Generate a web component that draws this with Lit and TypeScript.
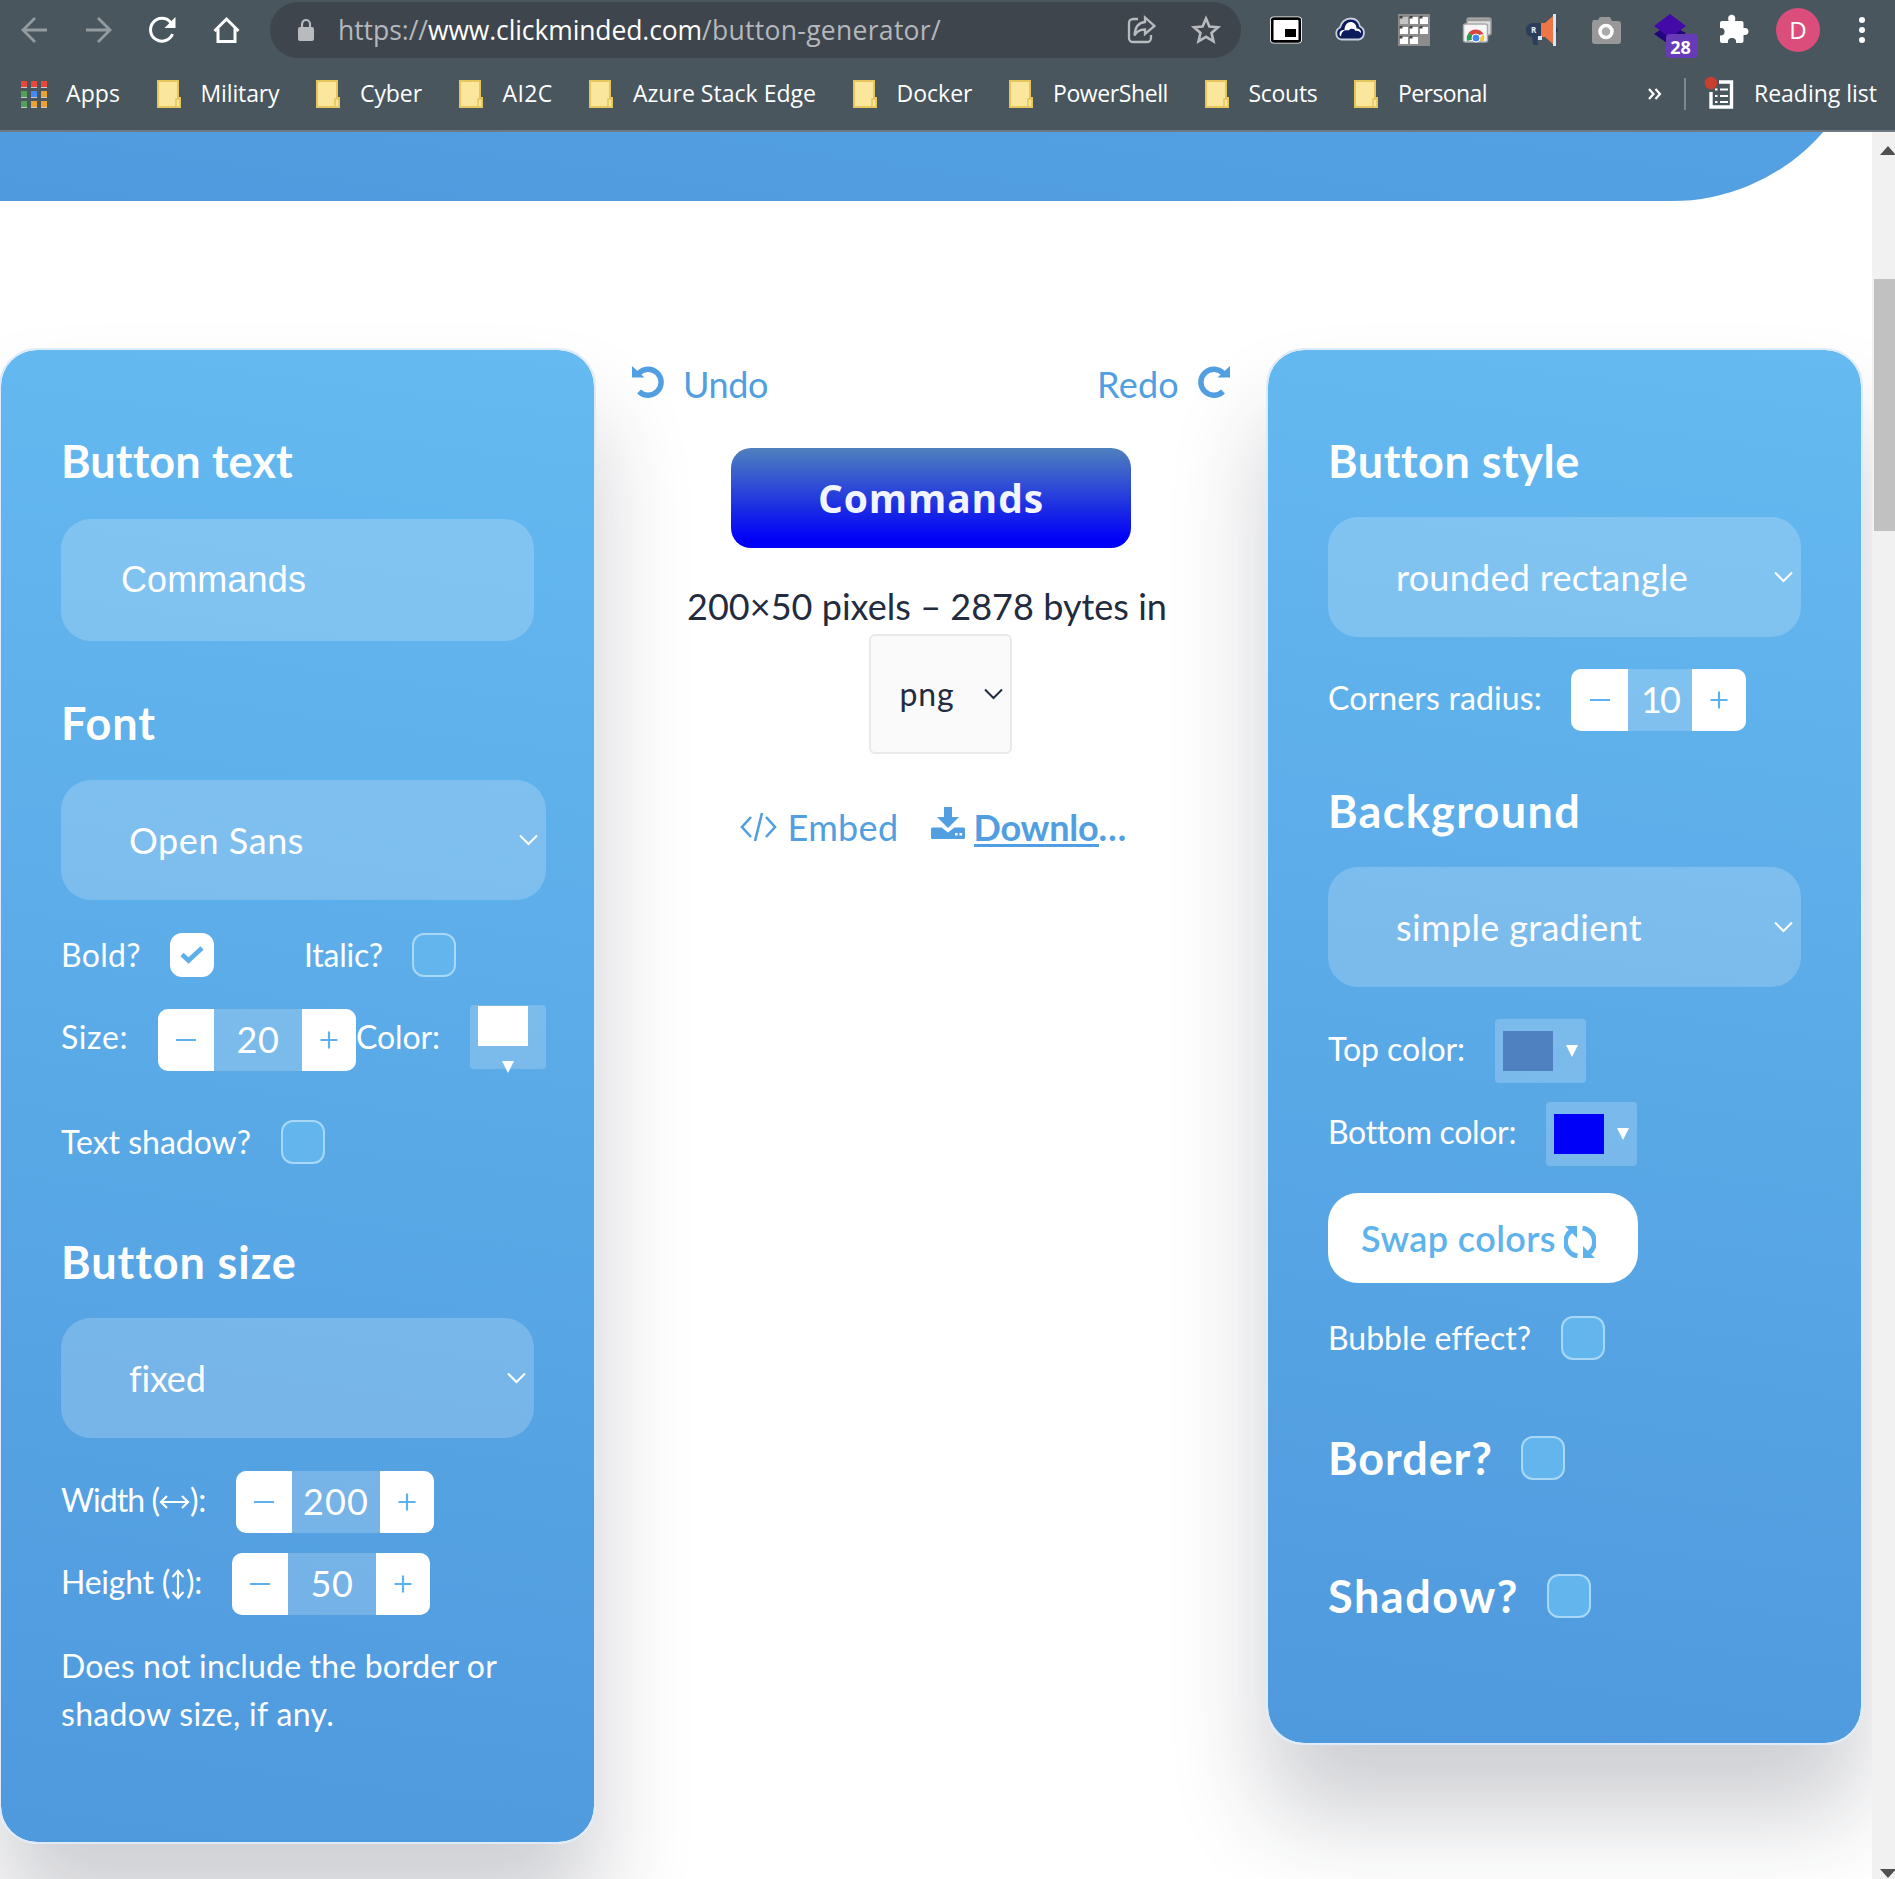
import { LitElement, html, css, svg, nothing } from "lit";
import { customElement, property, state } from "lit/decorators.js";

/** Text run that tracks its letters so that it takes up a given width. */
@customElement("fit-text")
class FitText extends LitElement {
  @property() text = "";
  @property({ type: Number }) width = 0;
  @state() private spacing = 0;
  static styles = css`
    :host { display: inline-block; white-space: pre; flex: none; }
    .run { display: inline-block; }
  `;
  async firstUpdated() {
    await document.fonts.ready;
    const run = this.renderRoot.querySelector(".run") as HTMLElement;
    const natural = run.getBoundingClientRect().width;
    if (this.width && natural) {
      this.spacing = (this.width - natural) / this.text.length;
    }
  }
  render() {
    return html`<span class="run" style="letter-spacing:${this.spacing}px">${this.text}</span>`;
  }
}

const t = (text: string, width: number) =>
  html`<fit-text .text=${text} .width=${width}></fit-text>`;

const chevron = html`<svg class="chev" width="19" height="12" viewBox="0 0 19 12"><path d="M1 1.5L9.5 10L18 1.5" fill="none" stroke="currentColor" stroke-width="2"/></svg>`;

const folder = html`<svg width="24" height="28" viewBox="0 0 24 28"><path d="M1 1h20v17h2v9H1z" fill="#fbe69e" stroke="#e6c65c" stroke-width="2"/><path d="M19 27v-8h4v8z" fill="#fbe69e" stroke="#e6c65c" stroke-width="1.5"/></svg>`;

const appDots = ["#e8483a", "#e8483a", "#e8483a", "#51a05a", "#4689f0", "#e9a233", "#51a05a", "#e9a233", "#e9a233"];

const bookmarks: [string, number][] = [
  ["Military", 79], ["Cyber", 62], ["AI2C", 50], ["Azure Stack Edge", 183],
  ["Docker", 76], ["PowerShell", 115], ["Scouts", 69], ["Personal", 89],
];

@customElement("browser-bar")
class BrowserBar extends LitElement {
  static styles = css`
    :host { display: block; height: 130px; background: #49565e; border-bottom: 2px solid #6e7983; color: #fff; font-family: "Open Sans", "Noto Sans", sans-serif; }
    svg { display: block; flex: none; overflow: visible; }
    .tools { display: flex; align-items: center; height: 60px; }
    .nav { display: flex; align-items: center; gap: 36.500px; width: 249px; padding-left: 21px; }
    .omni { display: flex; align-items: center; width: 971px; height: 56px; border-radius: 28px; background: #3e454c; margin-top: -1px; box-sizing: border-box; padding: 0 20px 0 28px; font-size: 26.5px; color: #b4b8bc; }
    .host { color: #fff; }
    .lock { margin-right: 24px; }
    .url { display: flex; flex: 1; line-height: 56px; }
    .acts { display: flex; align-items: center; gap: 35px; }
    .exts { display: flex; align-items: center; gap: 32px; margin-left: 29px; }
    .badged { position: relative; }
    .badge { position: absolute; left: 12px; top: 20px; width: 32px; height: 24px; border-radius: 4px; background: #673ab7; font-size: 18px; font-weight: 700; line-height: 27px; text-align: center; box-sizing: border-box; padding-right: 3px; }
    .avatar { width: 44px; height: 44px; border-radius: 50%; background: #db4e7c; font-size: 24px; line-height: 44px; text-align: center; margin-left: 26px; }
    .more { margin-left: 39px; }
    .marks { display: flex; align-items: center; height: 68px; padding-left: 21px; font-size: 23px; }
    .marks fit-text { line-height: 66px; height: 68px; }
    .apps { margin-right: 19px; }
    .folder { margin: 0 20px 0 36.5px; display: block; }
    .spacer { flex: 1; }
    .sep { width: 2px; height: 32px; background: #7c878e; margin: 0 19px 0 22px; }
    .list { margin-right: 17px; }
    .end { margin-right: 18px; display: flex; }
  `;
  render() {
    return html`
      <div class="tools">
        <div class="nav">
          <svg width="27" height="28" viewBox="0 0 27 28" fill="none" stroke="#949b9f" stroke-width="2.8"><path d="M26 14H2M14 2L2 14l12 12"/></svg>
          <svg width="27" height="28" viewBox="0 0 27 28" fill="none" stroke="#949b9f" stroke-width="2.8"><path d="M1 14h24M13 2l12 12L13 26"/></svg>
          <svg width="28" height="28" viewBox="0 0 28 28"><path d="M24.5 18A11.4 11.4 0 1 1 22.5 6.2" fill="none" stroke="#fff" stroke-width="3"/><path d="M27.5 1v11h-11z" fill="#fff"/></svg>
          <svg width="27" height="28" viewBox="0 0 27 28"><path d="M5 12.5v13h17v-13M1.5 15L13.5 3l12 12" fill="none" stroke="#fff" stroke-width="3"/></svg>
        </div>
        <div class="omni">
          <svg class="lock" width="16" height="22" viewBox="0 0 16 22"><rect y="8" width="16" height="14" rx="2" fill="#b8bbbe"/><path d="M4 9V5a4 4 0 0 1 8 0v4" fill="none" stroke="#b8bbbe" stroke-width="2.2"/></svg>
          <div class="url">${t("https://", 90)}<span class="host">${t("www.clickminded.com", 274)}</span>${t("/button-generator/", 239)}</div>
          <div class="acts">
            <svg width="28" height="28" viewBox="0 0 28 28" fill="none" stroke="#b8bbbe" stroke-width="2.3"><path d="M10 3H5a4 4 0 0 0-4 4v15a4 4 0 0 0 4 4h14a4 4 0 0 0 4-4v-3"/><path d="M17 6V1.500l9.500 8.500L17 18v-4.500c-6 0-8.500 2-10.500 6C7 12 10 6.500 17 6z"/></svg>
            <svg width="30" height="30" viewBox="0 0 30 30"><path d="M15 3.500l3.400 8 8.600.7-6.500 5.700 2 8.400L15 21.800l-7.500 4.500 2-8.400L3 12.200l8.600-.7z" fill="none" stroke="#b8bbbe" stroke-width="2.6"/></svg>
          </div>
        </div>
        <div class="exts">
          <svg width="32" height="32" viewBox="0 0 32 32"><rect x="0" y="2.500" width="32" height="27" rx="4" fill="#fff"/><rect x="2.200" y="4.600" width="27.600" height="22.800" rx="2" fill="#fff" stroke="#000" stroke-width="2.600"/><rect x="15" y="15" width="11" height="8" fill="#000"/></svg>
          <svg width="32" height="32" viewBox="0 0 32 32"><path d="M7 25.500a6.400 6.400 0 0 1-1-12C7 8 11.500 4.500 16.500 4.500c5 0 8.500 3 9.500 8A7 7 0 0 1 25 25.500z" fill="#0b1b5c" stroke="#c9cfdf" stroke-width="1.800"/><path d="M5.500 20c0-3 2.500-4.500 5-4 0-5 3-8 6-8 3.500 0 6 2.500 6 6.500 3 0 5 2 4.500 5-1-2-3-3-5.500-2.500-1-2.500-5-3-7-.5-3.500-1-7 .5-7.500 6-1-.5-1.500-1.500-1.500-2.500z" fill="#fff"/></svg>
          <svg width="32" height="32" viewBox="0 0 32 32"><rect width="32" height="32" fill="#8c8c8c"/>${[0, 1, 2, 3, 4, 5, 6, 7].map((i) => svg`<path d="M${2 + (i % 3) * 10} ${3 + Math.floor(i / 3) * 10}h8v7h-8z" fill=${i ? "#fff" : "#c4c4c4"}/><path d="M${1.5 + (i % 3) * 10} ${2 + Math.floor(i / 3) * 10}h3v2.500h-3z" fill="#444"/>`)}</svg>
          <svg width="32" height="32" viewBox="0 0 32 32"><rect x="5" y="4" width="24" height="17" rx="2" fill="#ddd" stroke="#999" stroke-width="1.500"/><path d="M5 6h24" stroke="#999" stroke-width="2.500"/><rect x="1.500" y="10" width="24" height="18" rx="2" fill="#f7f7f7" stroke="#aaa" stroke-width="1.500"/><path d="M5 27a8.500 8.500 0 0 1 3-9l5 7z" fill="#2f9e4f"/><path d="M6.500 19a9 9 0 0 1 15 1l-9 2z" fill="#d8453c"/><path d="M21.500 20a8 8 0 0 1 0 7h-7z" fill="#f8c63c"/><circle cx="14" cy="24" r="4" fill="#4285f4" stroke="#fff"/></svg>
          <svg width="32" height="32" viewBox="0 0 32 32"><path d="M7 9h9v14h-5l1 8H7l-1-8C2 23 0 20 0 16s3-7 7-7zM29 13c4 0 4 6 0 6z" fill="#2a3e5a"/><path d="M15 9l4 0 8-7v28l-8-7h-4z" fill="#ee7546"/><rect x="27" width="3" height="32" fill="#d6e8f7"/><rect x="12" y="22" width="4" height="4" fill="#d6e8f7"/><text x="5" y="19" font-size="8" font-weight="700" fill="#e8eef5">R</text></svg>
          <svg width="32" height="32" viewBox="0 0 32 32"><path d="M3 6h5l2-3h10l2 4h6a3 3 0 0 1 3 3v17a3 3 0 0 1-3 3H5a3 3 0 0 1-3-3V9z" fill="#989898"/><circle cx="16" cy="17.500" r="6" fill="#aaa" stroke="#fff" stroke-width="3.500"/></svg>
          <div class="badged">
            <svg width="32" height="32" viewBox="0 0 32 32"><path d="M0 20l6-4 20 0 6 3-16 12z" fill="#22057a"/><path d="M16 0l16 12-16 12L0 12z" fill="#430aa8"/></svg>
            <span class="badge">28</span>
          </div>
          <svg width="32" height="32" viewBox="0 0 32 32"><path d="M4 7h6.500C9.500 3 11 .8 13.700 .8S18 3 17 7h6.500a2 2 0 0 1 2 2v5c3.500-.6 5 1.200 5 3.500s-1.500 4-5 3.500v6a2 2 0 0 1-2 2H18c.500-3.500-1.200-5-4-5s-4.500 1.500-4 5H4a2 2 0 0 1-2-2v-5.500c3 .3 4.600-1.200 4.600-3.900S5 13.500 2 14V9a2 2 0 0 1 2-2z" fill="#fff"/></svg>
        </div>
        <div class="avatar">D</div>
        <svg class="more" width="6" height="28" viewBox="0 0 6 28" fill="#fff"><circle cx="3" cy="4" r="3"/><circle cx="3" cy="14" r="3"/><circle cx="3" cy="24" r="3"/></svg>
      </div>
      <div class="marks">
        <svg class="apps" width="26" height="28" viewBox="0 0 26 28">${appDots.map((c, i) => svg`<rect x=${(i % 3) * 10} y=${1 + Math.floor(i / 3) * 10} width="6" height="6" fill=${c}/><rect x=${(i % 3) * 10} y=${7 + Math.floor(i / 3) * 10} width="6" height="1" fill="#c6c9cb"/>`)}</svg>
        ${t("Apps", 54)}
        ${bookmarks.map(([name, w]) => html`<span class="folder">${folder}</span>${t(name, w)}`)}
        <span class="spacer"></span>
        <svg width="14" height="12" viewBox="0 0 14 12" fill="none" stroke="#fff" stroke-width="2.200"><path d="M1 1l4.500 5L1 11M7.500 1l4.500 5-4.500 5"/></svg>
        <span class="sep"></span>
        <svg class="list" width="32" height="34" viewBox="0 0 32 34"><path d="M14 5h12.500v25H6V15" fill="none" stroke="#fff" stroke-width="3.400"/><path d="M10 12.500h2.500M15 12.500h8M10 19h2.500M15 19h8M10 25h2.500M15 25h8" stroke="#fff" stroke-width="2.200"/><circle cx="6" cy="6" r="6.300" fill="#c83e2f"/></svg>
        <span class="end">${t("Reading list", 123)}</span>
      </div>`;
  }
}

@customElement("app-root")
class AppRoot extends LitElement {
  static styles = css`
    :host { display: block; width: 1895px; height: 1879px; overflow: hidden; background: #fff; color: #fff; font-family: Lato, "Open Sans", sans-serif; }
    svg { display: block; flex: none; }
    .view { display: flex; height: 1747px; overflow: hidden; }
    .page { width: 1872px; flex: none; overflow: hidden; }
    .hero { height: 200px; margin-top: -131px; border-bottom-right-radius: 200px; background: linear-gradient(8deg, #4f9ade, #55a4e4); }
    .cols { display: flex; align-items: flex-start; margin: 147px 0 0 -1px; }
    .card { box-sizing: border-box; width: 597px; flex: none; border: 2px solid #dfeafb; border-radius: 38px; padding: 81px 60px 0; background: linear-gradient(188deg, #65baf1, #4f99dd) padding-box; box-shadow: 0 70px 95px rgba(31, 38, 55, 0.22); }
    .left { height: 1496px; }
    .right { height: 1397px; }
    .h { font-size: 45px; font-weight: 700; line-height: 60px; height: 60px; }
    .field { display: flex; align-items: center; justify-content: space-between; box-sizing: border-box; height: 120px; border-radius: 30px; background: rgba(255, 255, 255, 0.2); padding: 0 8px 0 68px; font-size: 36px; line-height: 117px; }
    .field.input { height: 122px; padding-left: 60px; font-family: "Liberation Sans", Arial, sans-serif; font-size: 36px; line-height: 122px; }
    .wide { width: 485px; }
    .row { display: flex; align-items: center; font-size: 32px; line-height: 44px; }
    .row.top { align-items: flex-start; height: 66px; }
    .stepwrap { margin-top: 4px; }
    .lab { flex: none; display: block; }
    .lab.up { margin-top: -5px; }
    .lab.base { margin-top: 10px; }
    .box { box-sizing: border-box; width: 44px; height: 44px; border: 2px solid #a9d7f6; border-radius: 12px; background: #62b6ed; display: grid; place-items: center; flex: none; }
    .box.on { background: #fff; border-color: #fff; }
    .step { display: flex; height: 62px; border-radius: 10px; overflow: hidden; background: rgba(255, 255, 255, 0.2); color: #fff; flex: none; }
    .btn { width: 56px; background: #fff; display: grid; place-items: center; }
    .btn.inc { width: 54px; }
    .btn.far { width: 57px; }
    .num { width: 88px; font-size: 36px; line-height: 60px; display: flex; justify-content: center; }
    .num.slim { width: 64px; }
    .pick { box-sizing: border-box; display: flex; align-items: center; width: 91px; height: 64px; border-radius: 4px; background: rgba(255, 255, 255, 0.2); padding-left: 8px; gap: 13px; flex: none; }
    .pick.tall { width: 76px; flex-direction: column; align-items: flex-start; padding-top: 1px; gap: 15px; }
    .pick.tall .tri { margin-left: 24px; }
    .sw { width: 50px; height: 40px; flex: none; }
    .c-white { background: #fff; }
    .c-top { background: #4f81c1; }
    .c-bottom { background: #0000f8; }
    .note { font-size: 32px; line-height: 48px; margin-top: 27px; }
    .note fit-text { display: block; }
    .swap { display: flex; align-items: center; width: 310px; height: 90px; box-sizing: border-box; border-radius: 30px; background: #fff; color: #5fb3ec; font-size: 36px; font-weight: 600; padding-left: 33px; gap: 8px; margin-top: 27px; line-height: 84px; }
    .swap svg { margin-top: 8px; }
    .m19 { margin-top: 19px; } .m20 { margin-top: 20px; } .m26 { margin-top: 26px; } .m27 { margin-top: 27px; } .m28 { margin-top: 28px; }
    .m32 { margin-top: 32px; } .m33 { margin-top: 33px; } .m49 { margin-top: 49px; } .m50 { margin-top: 50px; } .m52 { margin-top: 52px; }
    .m68 { margin-top: 68px; } .m76 { margin-top: 76px; } .m94 { margin-top: 94px; }
    .w-bold { width: 109px; } .w-italic { width: 108px; margin-left: 90px; } .w-size { width: 97px; } .w-color { width: 114px; }
    .w-shadow { width: 220px; } .w-width { width: 175px; } .w-height { width: 171px; }
    .w-radius { width: 243px; } .w-top { width: 167px; } .w-bot { width: 218px; } .w-bubble { width: 233px; }
    .w-border { width: 193px; } .w-sh { width: 219px; }
    .row.big { font-size: 45px; font-weight: 700; height: 44px; }
    .arrow { display: flex; align-items: center; }
    .arrow svg { margin-top: 5px; }
    .mid { width: 670px; display: flex; flex-direction: column; align-items: center; position: relative; z-index: 1; color: #519fe0; font-size: 36px; }
    .undo { display: flex; justify-content: space-between; align-self: stretch; padding: 16px 36px 0; line-height: 40px; }
    .undo span { display: flex; gap: 18px; }
    .undo svg { margin-top: 1px; }
    .preview { display: flex; justify-content: center; width: 400px; height: 100px; border-radius: 20px; background: linear-gradient(#4f81bd, #0000f8 92%); margin-top: 44px; color: #f2f4ff; font: 700 39px/99px "Open Sans", sans-serif; }
    .cap { color: #222c3e; margin: 35px 8px 0 0; line-height: 46px; height: 51px; }
    .fmt { box-sizing: border-box; display: flex; align-items: center; justify-content: space-between; width: 143px; height: 120px; border: 2px solid #e9e9e9; border-radius: 6px; background: #fafafa; color: #222c3e; font-size: 32px; line-height: 112px; padding: 0 7px 0 29px; margin-left: 18px; }
    .links { display: flex; align-items: flex-start; line-height: 40px; margin: 53px 0 0 7px; width: 390px; }
    .links .code { margin: 5px 11px 0 0; }
    .links .dl { margin: 0 9px 0 32px; }
    .down { font-weight: 700; display: flex; }
    .under { border-bottom: 3px solid #519fe0; height: 37px; line-height: 40px; }
    .bar { width: 23px; background: #f1f1f1; display: flex; flex-direction: column; flex: none; align-items: center; overflow: hidden; position: relative; z-index: 2; }
    .thumb { width: 21px; height: 252px; background: #c1c1c1; margin: 124px 0 auto 2px; }
    .bar .up { margin: 14px 0 0 9px; }
    .bar .dn { margin: 0 0 1px 9px; }
  `;

  private check(on = false) {
    return html`<span class="box ${on ? "on" : ""}">${on ? html`<svg width="24" height="18" viewBox="0 0 24 18"><path d="M2 8.500l6.500 6L22 2" fill="none" stroke="#5cafe9" stroke-width="4.600"/></svg>` : nothing}</span>`;
  }
  private stepper(value: string, w: number, slim = false) {
    return html`<span class="step">
      <span class="btn ${slim ? "far" : ""}"><svg width="20" height="20" viewBox="0 0 20 20"><path d="M0 10h20" stroke="#5cb2ec" stroke-width="2.200"/></svg></span>
      <span class="num ${slim ? "slim" : ""}">${t(value, w)}</span>
      <span class="btn inc"><svg width="18" height="18" viewBox="0 0 18 18"><path d="M0.500 9h17M9 .500v17" stroke="#5cb2ec" stroke-width="2.200"/></svg></span>
    </span>`;
  }
  private picker(color: string, tall = false) {
    return html`<span class="pick ${tall ? "tall" : ""}"><span class="sw ${color}"></span><svg class="tri" width="12" height="12" viewBox="0 0 12 12"><path d="M0 0h12L6 12z" fill="#fff"/></svg></span>`;
  }
  private select(text: string, w: number, cls: string) {
    return html`<div class="field ${cls}">${t(text, w)}${chevron}</div>`;
  }

  render() {
    return html`
      <browser-bar></browser-bar>
      <div class="view">
        <div class="page">
          <div class="hero"></div>
          <div class="cols">
            <section class="card left">
              <div class="h">${t("Button text", 230)}</div>
              <div class="field input m28">${t("Commands", 185)}</div>
              <div class="h m52">${t("Font", 95)}</div>
              ${this.select("Open Sans", 175, "wide m27")}
              <div class="row m33">
                <span class="lab w-bold">${t("Bold?", 80)}</span>${this.check(true)}
                <span class="lab w-italic">${t("Italic?", 79)}</span>${this.check()}
              </div>
              <div class="row top m28">
                <span class="lab base w-size">${t("Size:", 67)}</span>
                <span class="stepwrap">${this.stepper("20", 43)}</span>
                <span class="lab base w-color">${t("Color:", 84)}</span>
                ${this.picker("c-white", true)}
              </div>
              <div class="row m49"><span class="lab w-shadow">${t("Text shadow?", 190)}</span>${this.check()}</div>
              <div class="h m68">${t("Button size", 234)}</div>
              ${this.select("fixed", 76, "m26")}
              <div class="row m33">
                <span class="lab up w-width arrow">${t("Width (", 98)}<svg width="31" height="16" viewBox="0 0 31 16"><path d="M2 8h27M8 2L2 8l6 6M23 2l6 6-6 6" fill="none" stroke="#fff" stroke-width="2.200"/></svg>${t("):", 16)}</span>${this.stepper("200", 66)}
              </div>
              <div class="row m20">
                <span class="lab up w-height arrow">${t("Height (", 109)}<svg width="16" height="31" viewBox="0 0 16 31"><path d="M8 2v27M2.500 8L8 2l5.500 6M2.500 23L8 29l5.500-6" fill="none" stroke="#fff" stroke-width="2.200"/></svg>${t("):", 16)}</span>${this.stepper("50", 43)}
              </div>
              <div class="note">${t("Does not include the border or", 436)}${t("shadow size, if any.", 273)}</div>
            </section>

            <section class="mid">
              <div class="undo">
                <span><svg width="33" height="33" viewBox="0 0 33 33"><path d="M6.500 8.500A13 13 0 1 1 7 26.500" fill="none" stroke="currentColor" stroke-width="5.400"/><path d="M0 1l12.500 11.500H0z" fill="currentColor"/></svg>${t("Undo", 85)}</span>
                <span>${t("Redo", 82)}<svg width="33" height="33" viewBox="0 0 33 33"><path d="M26.500 8.500A13 13 0 1 0 26 26.500" fill="none" stroke="currentColor" stroke-width="5.400"/><path d="M33 1L20.500 12.500H33z" fill="currentColor"/></svg></span>
              </div>
              <div class="preview">${t("Commands", 226)}</div>
              <div class="cap">${t("200×50 pixels – 2878 bytes in", 480)}</div>
              <div class="fmt">${t("png", 55)}${chevron}</div>
              <div class="links">
                <svg class="code" width="37" height="30" viewBox="0 0 37 30" fill="none" stroke="currentColor" stroke-width="2.600"><path d="M11 5L2 15l9 10M26 5l9 10-9 10M22 1l-7 28"/></svg>
                ${t("Embed", 111)}
                <svg class="dl" width="34" height="32" viewBox="0 0 34 32" fill="currentColor"><path d="M13 0h8v10h7L17 21 6 10h7z"/><path fill-rule="evenodd" d="M1.500 20.500h9l6.500 5 6.500-5h9a1.500 1.500 0 0 1 1.500 1.500v8.500a1.500 1.500 0 0 1-1.500 1.500h-31A1.500 1.500 0 0 1 0 30.500V22a1.500 1.500 0 0 1 1.500-1.500zM24 26v2.600h2.600V26zM28.500 26v2.600h2.600V26z"/></svg>
                <span class="down"><span class="under">${t("Downlo", 125)}</span>${t("…", 29)}</span>
              </div>
            </section>

            <section class="card right">
              <div class="h">${t("Button style", 250)}</div>
              ${this.select("rounded rectangle", 292, "m26")}
              <div class="row m32"><span class="lab up w-radius">${t("Corners radius:", 214)}</span>${this.stepper("10", 38, true)}</div>
              <div class="h m50">${t("Background", 253)}</div>
              ${this.select("simple gradient", 246, "m26")}
              <div class="row m32"><span class="lab up w-top">${t("Top color:", 137)}</span>${this.picker("c-top")}</div>
              <div class="row m19"><span class="lab up w-bot">${t("Bottom color:", 187)}</span>${this.picker("c-bottom")}</div>
              <div class="swap">${t("Swap colors", 195)}<svg width="32" height="32" viewBox="0 0 32 32" fill="none" stroke="currentColor" stroke-width="5"><path d="M13.500 30A14 14 0 0 1 7 5M18.500 2A14 14 0 0 1 25 27"/><path d="M1 0h12v12zM31 32H19V20z" fill="currentColor" stroke="none"/></svg></div>
              <div class="row m33"><span class="lab w-bubble">${t("Bubble effect?", 202)}</span>${this.check()}</div>
              <div class="row big m76"><span class="lab w-border">${t("Border?", 165)}</span>${this.check()}</div>
              <div class="row big m94"><span class="lab w-sh">${t("Shadow?", 191)}</span>${this.check()}</div>
            </section>
          </div>
        </div>
        <div class="bar">
          <svg class="up" width="16" height="9" viewBox="0 0 16 9"><path d="M0 9L8 0l8 9z" fill="#505050"/></svg>
          <span class="thumb"></span>
          <svg class="dn" width="16" height="9" viewBox="0 0 16 9"><path d="M0 0L8 9l8-9z" fill="#505050"/></svg>
        </div>
      </div>`;
  }
}
